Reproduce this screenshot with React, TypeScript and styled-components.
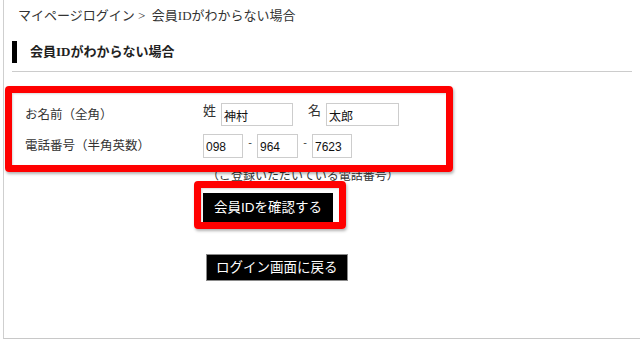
import React from 'react'
import styled, { createGlobalStyle } from 'styled-components'

const GlobalStyle = createGlobalStyle`
	html, body {
		margin: 0;
		padding: 0;
		background: #fff;
	}
	* {
		box-sizing: border-box;
	}
`

const serif = `"Liberation Serif", "Noto Sans CJK JP", serif`
const sans = `"Liberation Sans", "Noto Sans CJK JP", sans-serif`

const Page = styled.div`
	position: relative;
	width: 640px;
	height: 340px;
	padding-left: 3px;
	overflow: hidden;
	font-family: ${serif};
	color: #333;
`

const Frame = styled.div`
	height: 339px;
	border-left: 1px solid #cfcfcf;
	border-bottom: 1px solid #c8c8c8;
	display: flex;
	flex-direction: column;
`

const Breadcrumb = styled.div`
	margin-top: 6px;
	padding-left: 14px;
	font-size: 13px;
	line-height: 20px;
	white-space: nowrap;
`

const Heading = styled.h1`
	margin: 15px 0 0 8px;
	height: 22px;
	border-left: 5px solid #000;
	padding-left: 13px;
	font-size: 13px;
	line-height: 22px;
	font-weight: bold;
	color: #222;
`

const Rule = styled.div`
	margin: 8px 0 0 8px;
	width: 620px;
	border-top: 1px solid #cccccc;
`

const Form = styled.div`
	margin-top: 31px;
	display: flex;
	flex-direction: column;
	gap: 8px;
`

const Row = styled.div<{ $height: number }>`
	display: grid;
	grid-template-columns: 178px auto;
	padding-left: 21px;
	height: ${(p) => p.$height}px;
	align-items: center;
`

const Label = styled.div`
	font-size: 12.5px;
	line-height: 16px;
	white-space: nowrap;
`

const Fields = styled.div`
	display: flex;
	align-items: flex-start;
	height: 100%;
`

const NameKanji = styled.span<{ $gapLeft?: number }>`
	font-size: 13px;
	line-height: 13px;
	margin-left: ${(p) => p.$gapLeft || 0}px;
	margin-right: 5px;
	margin-top: 1px;
`

const Input = styled.input<{ $width: number }>`
	width: ${(p) => p.$width}px;
	height: 100%;
	border: 1px solid #cdcdcd;
	padding: 2px 2px 0;
	margin: 0;
	font-family: ${sans};
	font-size: 12px;
	color: #111;
	background: #fff;
	outline: none;
`

const Dash = styled.span`
	width: 4px;
	margin: 0 5px;
	font-family: ${sans};
	font-size: 11px;
	line-height: 16px;
	color: #444;
	text-align: center;
`

const Note = styled.div`
	margin: 11px 0 0 203px;
	font-size: 12px;
	line-height: 14px;
	white-space: nowrap;
`

const ActionButton = styled.button<{ $height: number; $pad: number; $left: number; $top: number; $bordered?: boolean }>`
	align-self: flex-start;
	margin: ${(p) => p.$top}px 0 0 ${(p) => p.$left}px;
	height: ${(p) => p.$height}px;
	padding: 0 ${(p) => p.$pad}px;
	background: #000;
	color: #fff;
	border: ${(p) => (p.$bordered ? '1px solid #8a8a8a' : 'none')};
	font-family: ${sans};
	font-size: 13.5px;
	line-height: 1;
	white-space: nowrap;
	cursor: pointer;
`

const Highlight = styled.div<{ $x: number; $y: number; $w: number; $h: number }>`
	position: absolute;
	left: ${(p) => p.$x}px;
	top: ${(p) => p.$y}px;
	width: ${(p) => p.$w}px;
	height: ${(p) => p.$h}px;
	border: 7px solid #ff0000;
	border-radius: 4px;
	box-shadow: 1px 2px 3px rgba(0, 0, 0, 0.3), inset 1px 1px 2px rgba(0, 0, 0, 0.15);
	pointer-events: none;
`

const App: React.FC = () => {
	return (
		<Page>
			<GlobalStyle />
			<Frame>
				<Breadcrumb>マイページログイン &gt;&nbsp; 会員IDがわからない場合</Breadcrumb>
				<Heading>会員IDがわからない場合</Heading>
				<Rule />

				<Form>
					<Row $height={23}>
						<Label>お名前（全角）</Label>
						<Fields>
							<NameKanji>姓</NameKanji>
							<Input $width={72} defaultValue="神村" />
							<NameKanji $gapLeft={15}>名</NameKanji>
							<Input $width={73} defaultValue="太郎" />
						</Fields>
					</Row>
					<Row $height={24}>
						<Label>電話番号（半角英数）</Label>
						<Fields>
							<Input $width={40} defaultValue="098" />
							<Dash>-</Dash>
							<Input $width={41} defaultValue="964" />
							<Dash>-</Dash>
							<Input $width={40} defaultValue="7623" />
						</Fields>
					</Row>
				</Form>
				<Note>（ご登録いただいている電話番号）</Note>

				<ActionButton $height={30} $pad={11} $left={199} $top={10}>
					会員IDを確認する
				</ActionButton>
				<ActionButton $height={27} $pad={9} $left={202} $top={31} $bordered>
					ログイン画面に戻る
				</ActionButton>
			</Frame>

			<Highlight $x={5} $y={86} $w={448} $h={86} />
			<Highlight $x={194} $y={181} $w={152} $h={48} />
		</Page>
	)
}

export default App
